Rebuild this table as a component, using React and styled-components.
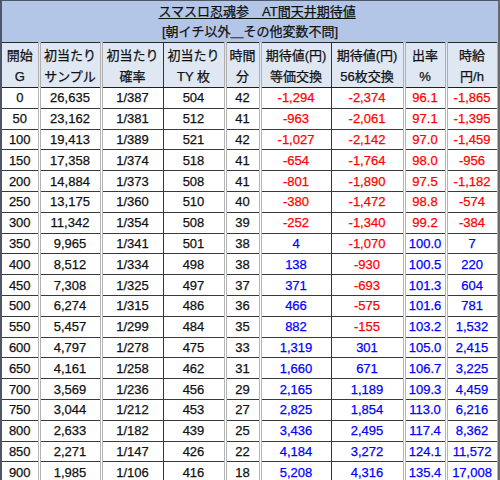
import React from 'react';
import styled, { createGlobalStyle } from 'styled-components';

const GlobalStyle = createGlobalStyle`
    body {
        margin: 0;
        background: #ffffff;
        font-family: "Liberation Sans", "Noto Sans CJK JP", sans-serif;
    }
`;

const rows = [
    ['0', '26,635', '1/387', '504', '42', '-1,294', '-2,374', '96.1', '-1,865'],
    ['50', '23,162', '1/381', '512', '41', '-963', '-2,061', '97.1', '-1,395'],
    ['100', '19,413', '1/389', '521', '42', '-1,027', '-2,142', '97.0', '-1,459'],
    ['150', '17,358', '1/374', '518', '41', '-654', '-1,764', '98.0', '-956'],
    ['200', '14,884', '1/373', '508', '41', '-801', '-1,890', '97.5', '-1,182'],
    ['250', '13,175', '1/360', '510', '40', '-380', '-1,472', '98.8', '-574'],
    ['300', '11,342', '1/354', '508', '39', '-252', '-1,340', '99.2', '-384'],
    ['350', '9,965', '1/341', '501', '38', '4', '-1,070', '100.0', '7'],
    ['400', '8,512', '1/334', '498', '38', '138', '-930', '100.5', '220'],
    ['450', '7,308', '1/325', '497', '37', '371', '-693', '101.3', '604'],
    ['500', '6,274', '1/315', '486', '36', '466', '-575', '101.6', '781'],
    ['550', '5,457', '1/299', '484', '35', '882', '-155', '103.2', '1,532'],
    ['600', '4,797', '1/278', '475', '33', '1,319', '301', '105.0', '2,415'],
    ['650', '4,161', '1/258', '462', '31', '1,660', '671', '106.7', '3,225'],
    ['700', '3,569', '1/236', '456', '29', '2,165', '1,189', '109.3', '4,459'],
    ['750', '3,044', '1/212', '453', '27', '2,825', '1,854', '113.0', '6,216'],
    ['800', '2,633', '1/182', '439', '25', '3,436', '2,495', '117.4', '8,362'],
    ['850', '2,271', '1/147', '426', '22', '4,184', '3,272', '124.1', '11,572'],
    ['900', '1,985', '1/106', '416', '18', '5,208', '4,316', '135.4', '17,008'],
];

const heads = [
    ['開始', 'G'],
    ['初当たり', 'サンプル'],
    ['初当たり', '確率'],
    ['初当たり', 'TY 枚'],
    ['時間', '分'],
    ['期待値(円)', '等価交換'],
    ['期待値(円)', '56枚交換'],
    ['出率', '%'],
    ['時給', '円/h'],
];

const widths = [37, 62, 62, 62, 35, 71, 73, 42, 52];
// vertical line after each column: true = dark single, false = grey double
const darkRight = [false, false, true, false, false, true, false, false, false];

function tone(col, value) {
    if (col < 5) return 'plain';
    if (col === 7) return parseFloat(value) >= 100 ? 'plus' : 'minus';
    return value.startsWith('-') ? 'minus' : 'plus';
}

function App() {
    return (
        <>
            <GlobalStyle />
            <Sheet>
                <Grid>
                    <colgroup>
                        {widths.map((w, i) => <col key={i} style={{ width: w }} />)}
                    </colgroup>
                    <thead>
                        <tr>
                            <TitleCell colSpan={9}>
                                <Title>スマスロ忍魂参　AT間天井期待値</Title>
                                <Subtitle>[朝イチ以外＿その他変数不問]</Subtitle>
                            </TitleCell>
                        </tr>
                        <tr>
                            {heads.map((h, i) => (
                                <HeadCell key={i} $dark={darkRight[i]}>
                                    <div>{h[0]}</div>
                                    <div>{h[1]}</div>
                                </HeadCell>
                            ))}
                        </tr>
                    </thead>
                    <tbody>
                        {rows.map((r) => (
                            <tr key={r[0]}>
                                {r.map((v, i) => (
                                    <Cell key={i} $dark={darkRight[i]} $tone={tone(i, v)}>{v}</Cell>
                                ))}
                            </tr>
                        ))}
                    </tbody>
                </Grid>
            </Sheet>
        </>
    );
}

const Sheet = styled.div`
    width: 500px;
    height: 480px;
    box-sizing: border-box;
    border-left: 2px solid #4d5566;
    border-top: 1px solid #4d5566;
    border-right: 2px solid #6a6a6a;
    background: #ffffff;
    overflow: hidden;
`;

const Grid = styled.table`
    width: 496px;
    table-layout: fixed;
    border-collapse: collapse;
    font-size: 13px;
    color: #111111;
    -webkit-text-stroke: 0.25px currentColor;
`;

const TitleCell = styled.th`
    height: 40px;
    padding: 1px 0 0;
    background: #b4c6e7;
    border-bottom: 1px solid #2a2a2a;
    font-weight: normal;
    line-height: 20px;
    text-align: center;
`;

const Title = styled.div`
    & {
        display: inline-block;
        text-decoration: underline;
        text-underline-offset: 2px;
        padding-left: 14px;
    }
`;

const Subtitle = styled.div`
    text-align: center;
`;

const HeadCell = styled.th`
    height: 42px;
    padding: 2px 0 0;
    background: #dfe7f3;
    font-weight: normal;
    line-height: 21px;
    text-align: center;
    white-space: nowrap;
    border-bottom: 1px solid #1f1f1f;
    border-right: ${(p) => (p.$dark ? '1px solid #333' : '3px double #b0b0b0')};
`;

const Cell = styled.td`
    height: 19.8px;
    padding: 0;
    text-align: center;
    line-height: 19px;
    white-space: nowrap;
    border-bottom: 1px solid #3a3a3a;
    border-right: ${(p) => (p.$dark ? '1px solid #333' : '3px double #b4b4b4')};
    color: ${(p) => (p.$tone === 'minus' ? '#ff0000' : p.$tone === 'plus' ? '#0000ff' : '#111111')};
`;

export default App;
